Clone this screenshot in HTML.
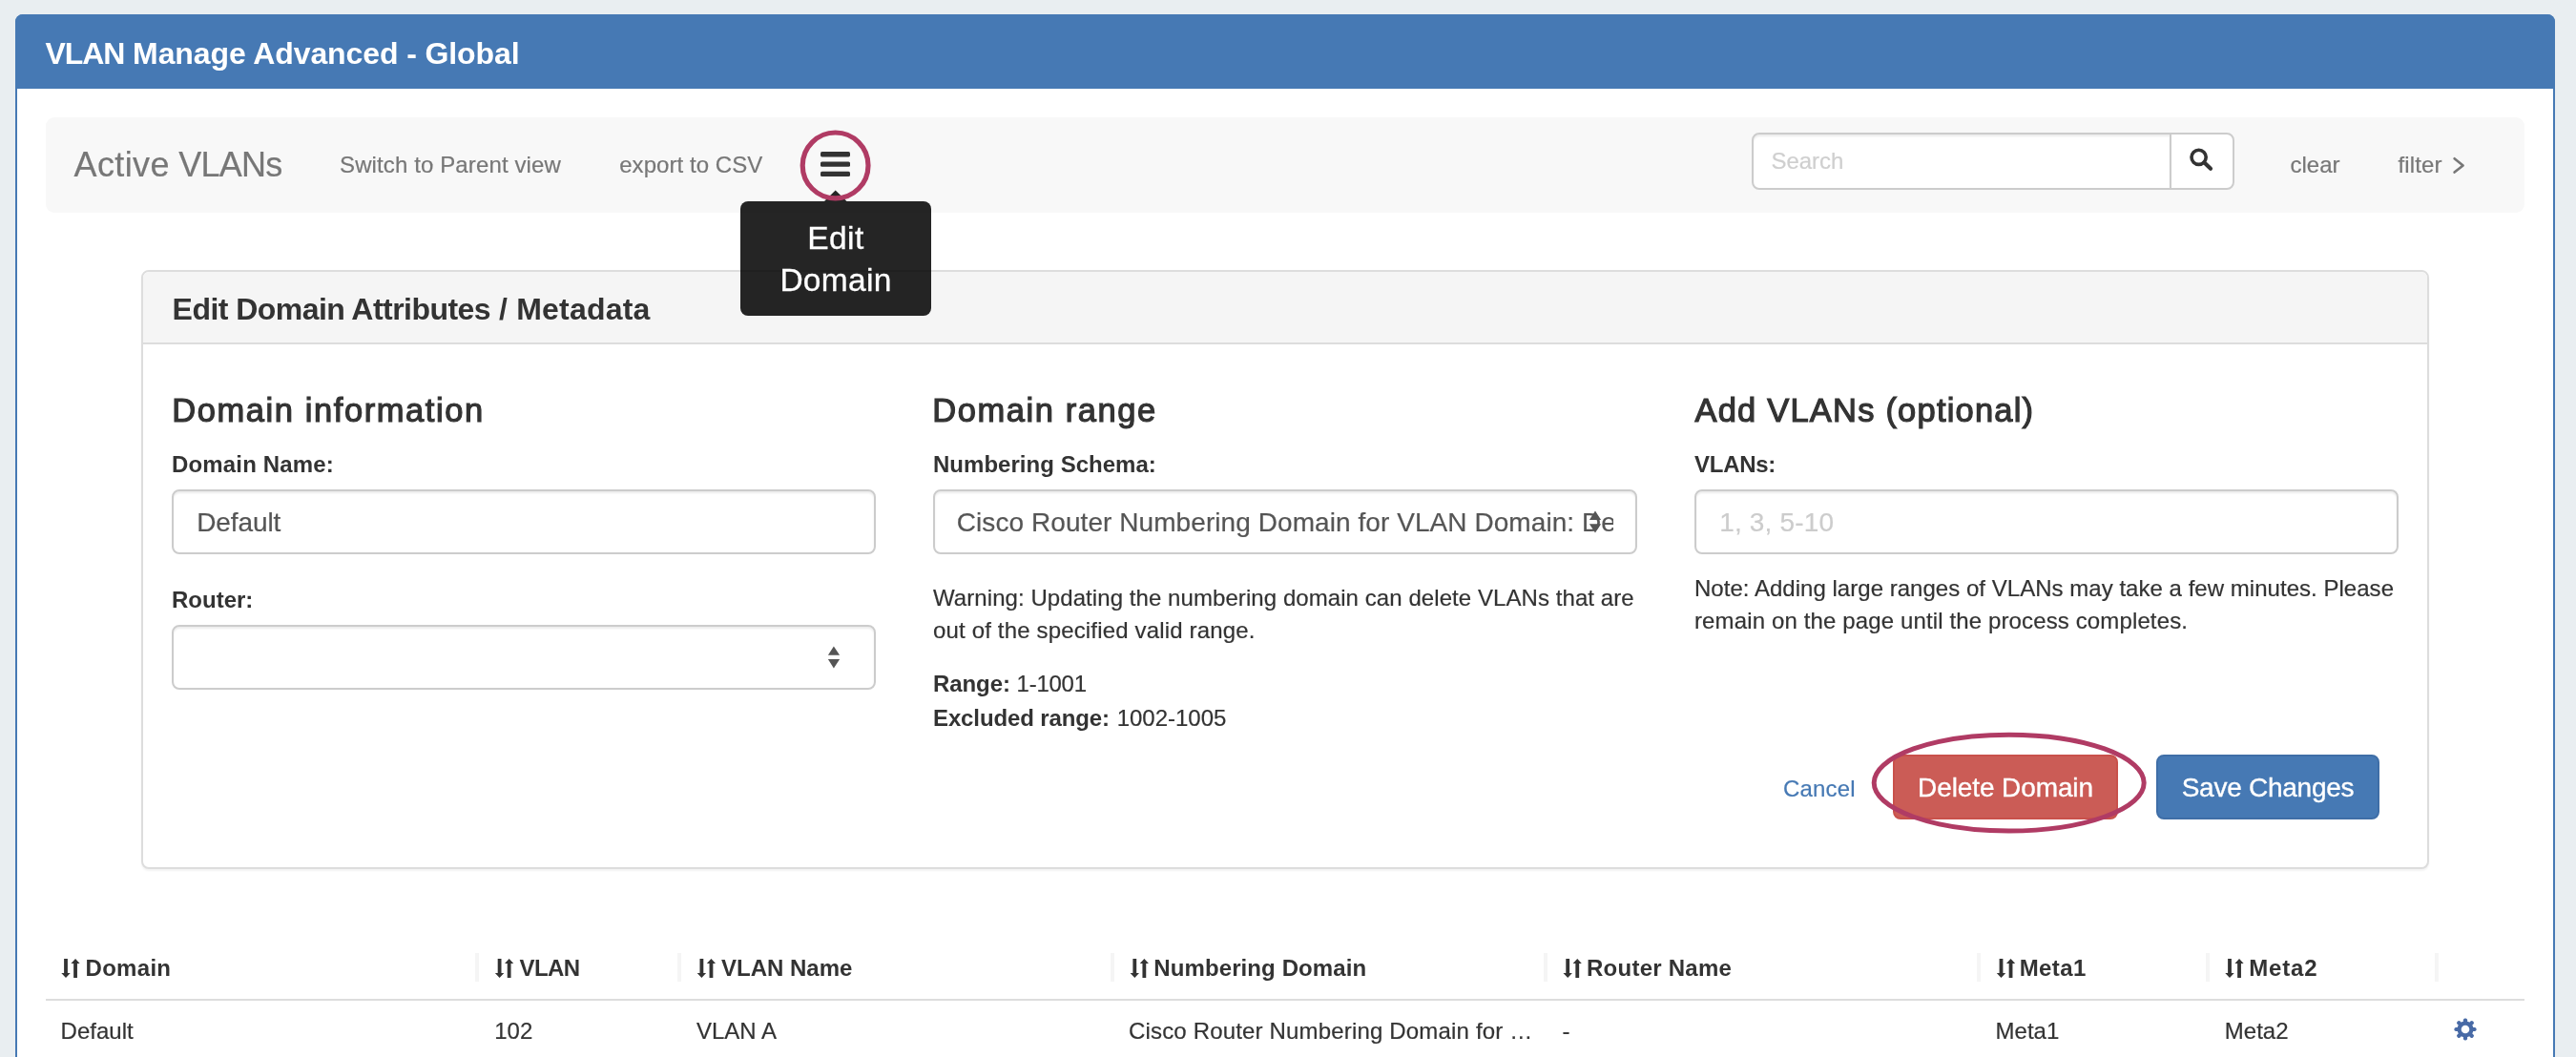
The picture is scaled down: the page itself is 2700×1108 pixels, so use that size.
<!DOCTYPE html>
<html lang="en">
<head>
<meta charset="utf-8">
<title>VLAN Manage Advanced - Global</title>
<style>
*{box-sizing:border-box;margin:0;padding:0}
html,body{width:2700px;height:1108px;overflow:hidden}
body{background:#e9eef1;font-family:"Liberation Sans",sans-serif;color:#333;position:relative}
.abs{position:absolute}
.t{position:absolute;white-space:nowrap;line-height:1;-webkit-text-stroke-width:.2px}
.b{font-weight:700;-webkit-text-stroke-width:0}
.f24{font-size:24px}
.f28{font-size:28px}
.f32{font-size:32px}
.f36{font-size:36px}
.grey{color:#777}
.panel{left:16px;top:15px;width:2662px;height:1200px;border:2px solid #4679b4;border-radius:8px;background:#fff}
.phead{left:16px;top:15px;width:2662px;height:78px;background:#4679b4;border-radius:8px 8px 0 0}
.toolbar{left:48px;top:123px;width:2598px;height:100px;background:#f8f8f8;border-radius:9px}
.ctl{position:absolute;background:#fff;border:2px solid #ccc;border-radius:8px;box-shadow:inset 0 2px 2px rgba(0,0,0,.075)}
.inner{left:148px;top:283px;width:2398px;height:628px;border:2px solid #ddd;border-radius:8px;background:#fff;box-shadow:0 2px 2px rgba(0,0,0,.05)}
.ihead{left:150px;top:285px;width:2394px;height:76px;background:#f5f5f5;border-bottom:2px solid #ddd;border-radius:6px 6px 0 0}
.h4{font-size:34.5px;-webkit-text-stroke:1.2px #333;letter-spacing:1.58px}
.sep{position:absolute;top:999px;width:4px;height:30px;background:#f5f5f5}
.btn{position:absolute;top:791px;height:68px;border-radius:8px;color:#fff;font-size:28px;text-align:center;line-height:65px;white-space:nowrap;-webkit-text-stroke:.35px #fff}
</style>
</head>
<body>
<div id="root" style="position:absolute;left:0;top:0;width:2700px;height:1108px;will-change:transform">

<!-- main panel -->
<div class="abs panel"></div>
<div class="abs phead"></div>
<div class="t b f32" style="left:47.6px;top:40px;color:#fff;letter-spacing:-.1px"><span style="letter-spacing:-1.1px">VLAN</span> Manage Advanced - Global</div>

<!-- toolbar -->
<div class="abs toolbar"></div>
<div class="t f36 grey" style="left:77.5px;top:154.5px;letter-spacing:-.75px"><span style="letter-spacing:.4px">Active</span> VLANs</div>
<div class="t f24 grey" style="left:356px;top:160.5px;letter-spacing:.12px">Switch to Parent view</div>
<div class="t f24 grey" style="left:649.2px;top:160.5px;letter-spacing:.06px">export to CSV</div>
<svg class="abs" style="left:856px;top:156px" width="40" height="34" viewBox="0 0 40 34">
  <rect x="4" y="3.1" width="31" height="5.3" rx="1.6" fill="#333"/>
  <rect x="4" y="13.45" width="31" height="5.3" rx="1.6" fill="#333"/>
  <rect x="4" y="23.7" width="31" height="5.3" rx="1.6" fill="#333"/>
</svg>

<!-- search -->
<div class="ctl" style="left:1836px;top:139px;width:440px;height:60px;border-radius:8px 0 0 8px"></div>
<div class="ctl" style="left:2274px;top:139px;width:68px;height:60px;border-radius:0 8px 8px 0;box-shadow:none"></div>
<div class="t f24" style="left:1856.5px;top:157px;color:#cfcfcf;letter-spacing:-.05px">Search</div>
<svg class="abs" style="left:2292px;top:152px" width="32" height="32" viewBox="0 0 32 32">
  <circle cx="12.6" cy="12.8" r="7.6" fill="none" stroke="#333" stroke-width="3.6"/>
  <path d="M18.2 18.2 L25 24.8" stroke="#333" stroke-width="4.2" stroke-linecap="round"/>
</svg>
<div class="t f24 grey" style="left:2400.5px;top:160.5px">clear</div>
<div class="t f24 grey" style="left:2513.4px;top:160.5px;letter-spacing:.15px">filter</div>
<svg class="abs" style="left:2566px;top:160px" width="24" height="28" viewBox="0 0 24 28">
  <path d="M6.6 6.2 L15.6 13.4 L6.6 20.6" fill="none" stroke="#777" stroke-width="2.6" stroke-linecap="round" stroke-linejoin="round"/>
</svg>

<!-- inner panel -->
<div class="abs inner"></div>
<div class="abs ihead"></div>
<div class="t b f32" style="left:180.6px;top:307.8px;letter-spacing:-.55px">Edit Domain Attributes<span style="letter-spacing:.2px"> / Metadata</span></div>

<!-- column 1 -->
<div class="t h4" style="left:180.2px;top:413.4px">Domain information</div>
<div class="t b f24" style="left:180px;top:475px;letter-spacing:.16px">Domain Name:</div>
<div class="ctl" style="left:180px;top:513px;width:737.5px;height:68px"></div>
<div class="t f28" style="left:206.2px;top:533.7px;color:#555;letter-spacing:-.1px">Default</div>
<div class="t b f24" style="left:180px;top:616.8px">Router:</div>
<div class="ctl" style="left:180px;top:655px;width:737.5px;height:68px"></div>
<svg class="abs" style="left:864px;top:673px" width="20" height="32" viewBox="0 0 20 32">
  <path d="M9.9 4.4 L16.1 13.8 L3.9 13.8Z M3.9 18.1 L16.1 18.1 L9.9 27.6Z" fill="#555"/>
</svg>

<!-- column 2 -->
<div class="t h4" style="left:977.2px;top:413.4px">Domain range</div>
<div class="t b f24" style="left:978px;top:475px;letter-spacing:.03px">Numbering Schema:</div>
<div class="ctl" style="left:978px;top:513px;width:737.5px;height:68px"></div>
<div class="abs" style="left:1000px;top:520px;width:691px;height:54px;overflow:hidden">
  <div class="t f28" style="left:2.8px;top:13.7px;color:#555;letter-spacing:.068px">Cisco Router Numbering Domain for VLAN Domain: Default</div>
</div>
<svg class="abs" style="left:1662px;top:531px" width="20" height="32" viewBox="0 0 20 32">
  <path d="M10 4.6 L16.1 14 L3.9 14Z M3.9 18.2 L16.1 18.2 L10 27.4Z" fill="#555"/>
</svg>
<div class="t f24" style="left:978px;top:614.6px;letter-spacing:.07px">Warning: Updating the numbering domain can delete VLANs that are</div>
<div class="t f24" style="left:978px;top:648.6px;letter-spacing:.16px">out of the specified valid range.</div>
<div class="t f24" style="left:978px;top:704.5px"><span class="b" style="letter-spacing:-.08px">Range:</span> <span style="letter-spacing:-.24px">1-1001</span></div>
<div class="t f24" style="left:978px;top:740.7px"><span class="b" style="letter-spacing:-.12px">Excluded range:</span> <span style="letter-spacing:-.02px;margin-left:1.1px">1002-1005</span></div>

<!-- column 3 -->
<div class="t h4" style="left:1776.5px;top:413.4px;letter-spacing:1.2px">Add VLANs (optional)</div>
<div class="t b f24" style="left:1776px;top:475px;letter-spacing:-.27px">VLANs:</div>
<div class="ctl" style="left:1776px;top:513px;width:737.5px;height:68px"></div>
<div class="t f28" style="left:1802.2px;top:533.7px;color:#ccc;letter-spacing:.18px">1, 3, 5-10</div>
<div class="t f24" style="left:1776px;top:605.2px;letter-spacing:.03px">Note: Adding large ranges of VLANs may take a few minutes. Please</div>
<div class="t f24" style="left:1776px;top:639.4px;letter-spacing:.13px">remain on the page until the process completes.</div>

<!-- buttons -->
<div class="t f24" style="left:1869px;top:815.3px;color:#4679b4;letter-spacing:.18px">Cancel</div>
<div class="btn" style="left:1984px;width:236px;background:#cb5c56;border:2px solid #c9514b;letter-spacing:-.1px">Delete Domain</div>
<div class="btn" style="left:2260px;width:234px;background:#4679b4;border:2px solid #3f6ea7;letter-spacing:-.25px">Save Changes</div>

<!-- table -->
<div class="abs" style="left:48px;top:1047px;width:2598px;height:2px;background:#ddd"></div>
<div class="sep" style="left:498px"></div>
<div class="sep" style="left:710px"></div>
<div class="sep" style="left:1164px"></div>
<div class="sep" style="left:1618px"></div>
<div class="sep" style="left:2072px"></div>
<div class="sep" style="left:2312px"></div>
<div class="sep" style="left:2552px"></div>

<svg class="abs" style="left:0;top:1000px" width="2700" height="30" viewBox="0 1000 2700 30">
  <defs>
    <path id="srt" d="M3.1 -0.3 h3.8 v15 h2.8 L5 19.8 L0.3 14.7 h2.8Z M13.15 19.7 h3.8 v-15 h2.7 L15.05 -0.4 L10.45 4.7 h2.7Z" fill="#333"/>
  </defs>
  <use href="#srt" x="64" y="1005.3"/>
  <use href="#srt" x="518.6" y="1005.3"/>
  <use href="#srt" x="730.4" y="1005.3"/>
  <use href="#srt" x="1184.3" y="1005.3"/>
  <use href="#srt" x="1638.2" y="1005.3"/>
  <use href="#srt" x="2092.5" y="1005.3"/>
  <use href="#srt" x="2332" y="1005.3"/>
</svg>
<div class="t b f24" style="left:89.5px;top:1003px;letter-spacing:.3px">Domain</div>
<div class="t b f24" style="left:544.5px;top:1003px;letter-spacing:-.6px">VLAN</div>
<div class="t b f24" style="left:756px;top:1003px">VLAN Name</div>
<div class="t b f24" style="left:1209.3px;top:1003px;letter-spacing:.1px">Numbering Domain</div>
<div class="t b f24" style="left:1663px;top:1003px;letter-spacing:.25px">Router Name</div>
<div class="t b f24" style="left:2116.7px;top:1003px;letter-spacing:.4px">Meta1</div>
<div class="t b f24" style="left:2357.3px;top:1003px;letter-spacing:.8px">Meta2</div>

<div class="t f24" style="left:63.6px;top:1068.7px">Default</div>
<div class="t f24" style="left:518.2px;top:1068.7px">102</div>
<div class="t f24" style="left:730px;top:1068.7px">VLAN A</div>
<div class="t f24" style="left:1183px;top:1068.7px;letter-spacing:.17px">Cisco Router Numbering Domain for …</div>
<div class="t f24" style="left:1637.5px;top:1068.7px">-</div>
<div class="t f24" style="left:2091.6px;top:1068.7px">Meta1</div>
<div class="t f24" style="left:2331.8px;top:1068.7px">Meta2</div>
<svg class="abs" style="left:2570px;top:1065px" width="28" height="28" viewBox="-14 -14 28 28">
  <g fill="#486aa6"><circle r="8.5"/><rect x="-2.1" y="-11.6" width="4.2" height="6" rx="1.8" transform="rotate(0)"/><rect x="-2.1" y="-11.6" width="4.2" height="6" rx="1.8" transform="rotate(45)"/><rect x="-2.1" y="-11.6" width="4.2" height="6" rx="1.8" transform="rotate(90)"/><rect x="-2.1" y="-11.6" width="4.2" height="6" rx="1.8" transform="rotate(135)"/><rect x="-2.1" y="-11.6" width="4.2" height="6" rx="1.8" transform="rotate(180)"/><rect x="-2.1" y="-11.6" width="4.2" height="6" rx="1.8" transform="rotate(225)"/><rect x="-2.1" y="-11.6" width="4.2" height="6" rx="1.8" transform="rotate(270)"/><rect x="-2.1" y="-11.6" width="4.2" height="6" rx="1.8" transform="rotate(315)"/></g>
  <circle r="4.3" fill="#fff"/>
</svg>

<!-- tooltip -->
<svg class="abs" style="left:860px;top:196px" width="32" height="16" viewBox="0 0 32 16">
  <path d="M4 15 L15.7 3.4 L27.5 15Z" fill="#252525"/>
</svg>
<div class="abs" style="left:776px;top:211px;width:200px;height:120px;border-radius:8px;background:rgba(0,0,0,.855)"></div>
<div class="t" style="left:776px;width:200px;top:232.6px;font-size:33.5px;color:#fff;text-align:center;letter-spacing:.5px;-webkit-text-stroke:.3px #fff">Edit</div>
<div class="t" style="left:776px;width:200px;top:276.6px;font-size:33.5px;color:#fff;text-align:center;letter-spacing:.3px;-webkit-text-stroke:.3px #fff">Domain</div>

<!-- annotation rings -->
<svg class="abs" style="left:830px;top:130px" width="92" height="88" viewBox="830 130 92 88">
  <circle cx="875.6" cy="173.4" r="34.4" fill="none" stroke="#b03b64" stroke-width="5.2"/>
</svg>
<svg class="abs" style="left:1950px;top:760px" width="312" height="122" viewBox="1950 760 312 122">
  <ellipse cx="2105.7" cy="820.6" rx="141.5" ry="50.4" fill="none" stroke="#b03b64" stroke-width="5"/>
</svg>

</div>
</body>
</html>
